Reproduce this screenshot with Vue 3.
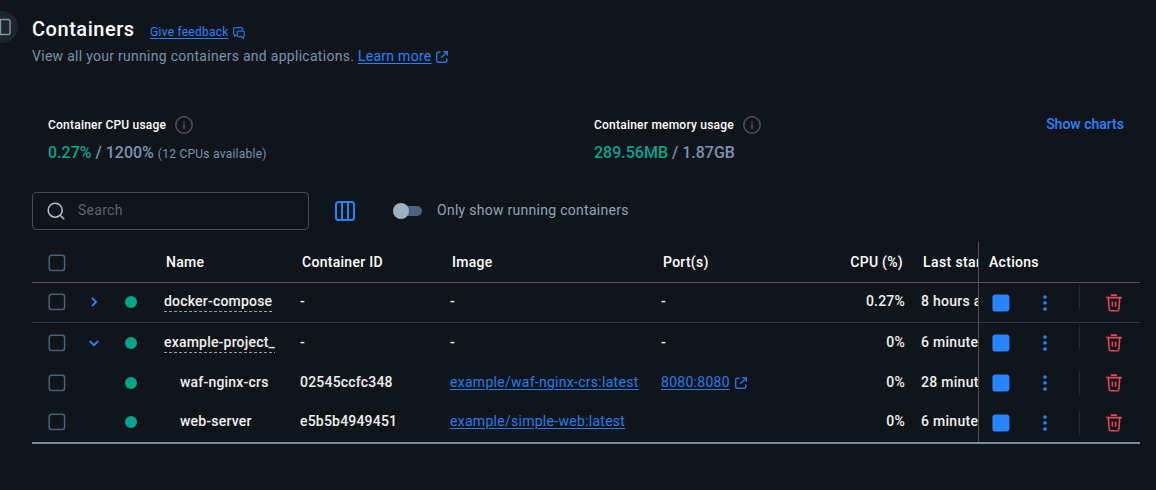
<script setup>
const rows = [
  { name: 'docker-compose', group: true, open: false, id: '-', image: '-', port: '-', cpu: '0.27%', started: '8 hours ago' },
  { name: 'example-project_', group: true, open: true, id: '-', image: '-', port: '-', cpu: '0%', started: '6 minutes ago' },
  { name: 'waf-nginx-crs', id: '02545ccfc348', image: 'example/waf-nginx-crs:latest', port: '8080:8080', cpu: '0%', started: '28 minutes ago' },
  { name: 'web-server', id: 'e5b5b4949451', image: 'example/simple-web:latest', port: '', cpu: '0%', started: '6 minutes ago' },
]
</script>

<template>
  <main class="page">
    <button class="drawer" aria-label="Toggle sidebar">
      <svg width="16" height="18" viewBox="0 0 16 18"><rect x="1" y="1.5" width="14" height="15" rx="2" /><path d="M5.5 1.5v15" /></svg>
    </button>

    <header class="heading">
      <div class="title-line">
        <h1>Containers</h1>
        <a class="feedback">Give feedback</a>
        <svg class="chat" width="12" height="12" viewBox="0 0 12 12"><path d="M3.4 8.1 1.6 9.2V7.7Q.6 7.4.6 6.4V2Q.6.7 1.9.7h6.4q1.3 0 1.3 1.3v1.3M5.6 4h4.5q1.3 0 1.3 1.3v2.9q0 1.1-1 1.3v1.8L8.5 9.6H5.6q-1.3 0-1.3-1.3v-3Q4.3 4 5.6 4Z" /></svg>
      </div>
      <p class="subtitle">View all your running containers and applications. <a>Learn more</a>
        <svg class="ext" width="12" height="12" viewBox="0 0 12 12"><path d="M4.6 1.2H2.2Q.7 1.2.7 2.7v7.1q0 1.5 1.5 1.5h7.1q1.5 0 1.5-1.5V7.4M7.2.7h4.1v4.1M11.1.9 5.2 6.8" /></svg>
      </p>
    </header>

    <section class="usage">
      <div class="metric cpu-metric">
        <div class="label">Container CPU usage
          <svg width="18" height="18" viewBox="0 0 18 18"><circle cx="9" cy="9" r="8.2" /><path d="M9 8v4.7M9 5.2v1.6" /></svg>
        </div>
        <div class="value"><b>0.27%</b> / 1200% <small>(12 CPUs available)</small></div>
      </div>
      <div class="metric">
        <div class="label">Container memory usage
          <svg width="18" height="18" viewBox="0 0 18 18"><circle cx="9" cy="9" r="8.2" /><path d="M9 8v4.7M9 5.2v1.6" /></svg>
        </div>
        <div class="value"><b>289.56MB</b> / 1.87GB</div>
      </div>
      <a class="charts">Show charts</a>
    </section>

    <section class="tools">
      <div class="search">
        <svg width="18" height="18" viewBox="0 0 18 18"><circle cx="8.2" cy="8.2" r="7" /><path d="m13.2 13.2 4 4" /></svg>
        <span>Search</span>
      </div>
      <svg class="columns" width="20" height="20" viewBox="0 0 20 20"><rect x="1" y="1" width="18" height="18" rx="2.5" /><path d="M7 1v18M13 1v18" /></svg>
      <span class="switch"><i></i></span>
      <span class="switch-label">Only show running containers</span>
    </section>

    <section class="table">
      <div class="data">
        <div class="row head">
          <svg class="box" width="18" height="18" viewBox="0 0 18 18"><rect x="1.2" y="1.2" width="15.4" height="15.4" rx="2.5" /></svg>
          <span></span><span></span>
          <span>Name</span><span>Container ID</span><span>Image</span><span>Port(s)</span><span class="num">CPU (%)</span><span class="last">Last started</span>
        </div>
        <div v-for="r in rows" :key="r.name" class="row" :class="{ closed: r.group && !r.open, group: r.group }">
          <svg class="box" width="18" height="18" viewBox="0 0 18 18"><rect x="1.2" y="1.2" width="15.4" height="15.4" rx="2.5" /></svg>
          <span class="chevron">
            <svg v-if="r.group" width="10" height="10" viewBox="0 0 10 10"><path :d="r.open ? 'm.8 3 4.2 4.2L9.2 3' : 'M3 .8 7.2 5 3 9.2'" /></svg>
          </span>
          <span class="dot"></span>
          <span class="name"><em>{{ r.name }}</em></span>
          <span class="id">{{ r.id }}</span>
          <span><a v-if="!r.group">{{ r.image }}</a><template v-else>-</template></span>
          <span class="port">
            <template v-if="r.group">-</template>
            <template v-else-if="r.port"><a>{{ r.port }}</a>
              <svg class="ext" width="12" height="12" viewBox="0 0 12 12"><path d="M4.6 1.2H2.2Q.7 1.2.7 2.7v7.1q0 1.5 1.5 1.5h7.1q1.5 0 1.5-1.5V7.4M7.2.7h4.1v4.1M11.1.9 5.2 6.8" /></svg>
            </template>
          </span>
          <span class="num">{{ r.cpu }}</span>
          <span class="last">{{ r.started }}</span>
        </div>
      </div>
      <div class="actions">
        <div class="action head">Actions</div>
        <div v-for="r in rows" :key="r.name" class="action" :class="{ closed: r.group && !r.open, group: r.group }">
          <svg class="stop" width="18" height="18" viewBox="0 0 18 18"><rect x=".4" y=".4" width="17" height="17" rx="3" /></svg>
          <svg class="more" width="4" height="16" viewBox="0 0 4 16"><circle cx="2" cy="2" r="1.8" /><circle cx="2" cy="8" r="1.8" /><circle cx="2" cy="14" r="1.8" /></svg>
          <span class="rule"></span>
          <svg class="trash" width="16" height="18" viewBox="0 0 16 18"><path d="M.2 3.6h15.6M5 1.1h6M2.2 3.6l1 11.6q.2 1.6 1.8 1.6h6q1.6 0 1.8-1.6l1-11.6M6.4 7.4v5.4M9.6 7.4v5.4" /></svg>
        </div>
      </div>
    </section>
  </main>
</template>

<style>
body { margin: 0; background: #10151b; }
</style>

<style scoped>
* { box-sizing: border-box; }
.page { position: relative; height: 490px; overflow: hidden; padding: 16px 16px 0 32px; background: #10151b; color: #fff; font: 14px/20px Roboto, sans-serif; }
svg { fill: none; stroke: currentColor; flex: none; }
a { color: #2684ff; text-decoration: underline; text-underline-offset: 2px; }
.drawer { position: absolute; left: -14px; top: 11px; width: 32px; height: 32px; border: 0; border-radius: 50%; background: #1c262d; color: #8196ab; padding: 0 0 0 9px; display: flex; align-items: center; justify-content: flex-start; }
.drawer svg { stroke-width: 1.4; }
.heading { height: 84px; }
.title-line { display: flex; height: 26px; align-items: center; }
h1 { margin: 0 15.5px 0 0; font-size: 20px; line-height: 26px; font-weight: 500; letter-spacing: .53px; }
.feedback { font-size: 12px; line-height: 16px; margin-top: 6px; letter-spacing: .24px; }
.chat { margin: 8px 0 0 4px; color: #2272d9; stroke-width: 1.25; }
.subtitle { margin: 4px 0 0; color: #7794ab; letter-spacing: .28px; white-space: nowrap; }
.ext { vertical-align: -2px; color: #2675dc; stroke-width: 1.4; }
.subtitle .ext { margin-left: 4px; vertical-align: -2px; }
.usage { display: flex; height: 92px; padding: 14px 16px 0; }
.cpu-metric { width: 546px; }
.label { display: flex; height: 22px; align-items: center; gap: 9px; font-size: 12px; font-weight: 500; letter-spacing: .22px; }
.label svg { color: #505357; stroke-width: 1.5; }
.value { margin-top: 7px; font-size: 16px; line-height: 20px; font-weight: 500; color: #7794b2; }
.value b { color: #00a58c; font-weight: 500; }
.value small { font-size: 12px; font-weight: 400; letter-spacing: .25px; }
.charts { margin-left: auto; text-decoration: none; font-weight: 500; }
.tools { display: flex; height: 38px; align-items: center; }
.search { width: 277px; height: 38px; border: 1px solid #464b50; border-radius: 4px; padding-left: 14px; display: flex; align-items: center; gap: 13px; color: #5b6670; letter-spacing: .28px; }
.search svg { color: #adbecb; stroke-width: 1.6; }
.search span { margin-top: -3px; }
.columns { margin-left: 26px; color: #2684ff; stroke-width: 2; }
.switch { width: 29px; height: 10px; border-radius: 5px; margin-left: 38px; background: #4a667f; }
.switch i { display: block; width: 16px; height: 16px; margin-top: -3px; border-radius: 50%; background: #9bb0c1; }
.switch-label { margin: -3px 0 0 15px; color: #8ba6ba; letter-spacing: .28px; }
.table { display: flex; margin-top: 12px; height: 202px; border-bottom: 2px solid #6f8da3; }
.data { width: 946px; overflow: hidden; }
.row { display: grid; grid-template-columns: 50px 24px 58px 136px 150px 211px 160px 84px 57px; height: 40px; align-items: center; white-space: nowrap; font-weight: 500; color: #f0f0f0; letter-spacing: .2px; }
.row > span:nth-child(n+4) { margin-top: -2px; }
.row:last-child { height: 39px; }
.row:last-child > span:nth-child(n+4) { margin-top: -3px; }
.row:last-child .box, .row:last-child .dot { margin-top: -1px; }
.head.row { height: 41px; border-bottom: 1px solid #51524f; color: #fff; letter-spacing: .28px; }
.head.row > span:nth-child(n+4) { position: relative; left: 2px; margin-top: 0; }
.head.row > span.num:nth-child(n+4) { left: -2px; }
.closed { border-bottom: 1px solid #263b47; }
.row.closed { padding-bottom: 1px; }
.box { margin-left: 16px; color: #47637b; stroke-width: 1.5; }
.head .box { margin-top: 2px; }
.chevron { color: #2684ff; line-height: 0; text-align: center; }
.chevron svg { stroke-width: 1.8; }
.dot { width: 12px; height: 12px; margin-left: 19px; border-radius: 50%; background: #00a58c; }
.name { padding-left: 16px; }
.group .name { padding-left: 0; }
em { font-style: normal; }
.group em { display: inline-block; line-height: 20px; padding-bottom: 1px; background: repeating-linear-gradient(90deg, #8ba0b1 0 3px, transparent 3px 5px) left bottom / 100% 1px no-repeat; }
.row a { color: #267de8; font-weight: 400; letter-spacing: .28px; }
.port { display: flex; align-items: center; gap: 5px; }
.port .ext { margin-top: 2px; }
.num { text-align: right; }
.last { margin-left: 16px; letter-spacing: .28px; }
.head .last { letter-spacing: .4px; }
.actions { flex: 1; border-left: 1px solid #51524f; }
.action { height: 40px; display: flex; align-items: center; padding-left: 13px; }
.head.action { height: 41px; padding: 0 0 0 10px; border-bottom: 1px solid #51524f; font-weight: 500; letter-spacing: .3px; }
.stop { fill: #2684ff; stroke: none; }
.more { margin-left: 33px; fill: #2684ff; stroke: none; }
.rule { width: 1px; height: 24px; margin-left: 32px; background: #252b31; }
.group .rule { margin-top: -12px; }
.trash { margin-left: 26px; color: #e04a5b; stroke-width: 1.6; }
</style>
